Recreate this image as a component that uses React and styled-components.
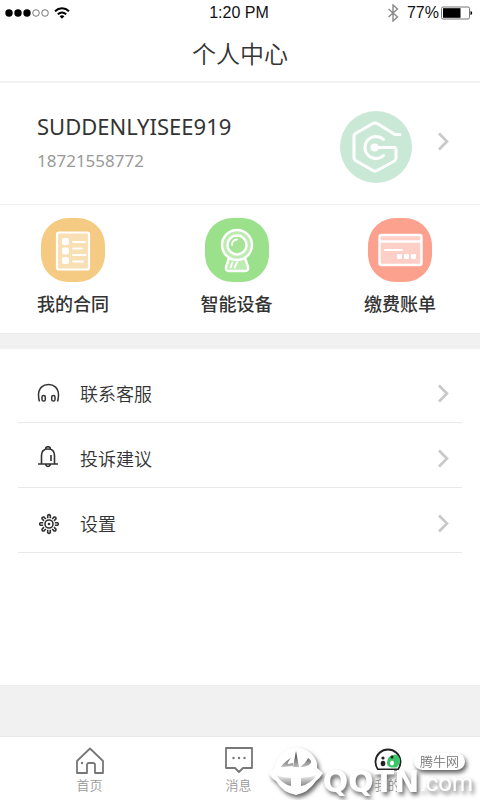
import React from "react";
import styled, { createGlobalStyle } from "styled-components";

const GlobalStyle = createGlobalStyle`
  * {
    box-sizing: border-box;
  }
  body {
    margin: 0;
    background: #f1f1f1;
    color: #333;
    font-family: "Liberation Sans", "Noto Sans CJK SC", sans-serif;
  }
`;

const Page = styled.div`
  min-height: 100vh;
  display: flex;
  flex-direction: column;
`;

const StatusBar = styled.div`
  display: grid;
  grid-template-columns: 1fr auto 1fr;
  align-items: center;
  height: 26px;
  padding: 0 7px 0 5px;
  background: #fff;
  color: #111;
  font-size: 16px;
`;

const StatusGroup = styled.div`
  display: flex;
  align-items: center;
  justify-content: ${(props) => (props.$end ? "flex-end" : "flex-start")};
  gap: ${(props) => (props.$end ? "2px" : "5px")};
`;

const BluetoothIcon = styled.svg`
  width: 12px;
  height: 18px;
  margin-right: 6px;
`;

const Header = styled.header`
  height: 57px;
  background: #fff;
  border-bottom: 2px solid #f1f1f1;
`;

const Title = styled.h1`
  margin: 0;
  font-size: 24px;
  font-weight: 350;
  line-height: 58px;
  text-align: center;
`;

const Profile = styled.a`
  display: flex;
  align-items: center;
  height: 122px;
  padding: 0 30px 0 37px;
  background: #fff;
  border-bottom: 1px solid #efefef;
  color: inherit;
  text-decoration: none;
`;

const ProfileText = styled.div`
  flex: 1;
`;

const Name = styled.div`
  font-family: "Noto Sans", sans-serif;
  font-size: 22px;
  line-height: 34px;
`;

const Phone = styled.div`
  color: #999;
  font-family: "Noto Sans", sans-serif;
  font-size: 17px;
  line-height: 36px;
`;

const AvatarIcon = styled.svg`
  width: 72px;
  height: 72px;
  margin: 7px 24px 0 0;
`;

const Shortcuts = styled.nav`
  display: flex;
  justify-content: space-between;
  padding: 13px 44px 10px 37px;
  background: #fff;
  border-bottom: 1px solid #e9e9e9;
`;

const Shortcut = styled.a`
  display: flex;
  flex-direction: column;
  align-items: center;
  color: #333;
  font-size: 18px;
  font-weight: 500;
  line-height: 36px;
  gap: 5px;
  text-decoration: none;
`;

const Tile = styled.svg`
  width: 64px;
  height: 64px;
`;

const Menu = styled.ul`
  min-height: 337px;
  margin: 15px 0 0;
  padding: 9px 18px;
  background: #fff;
  border-bottom: 1px solid #ececec;
  list-style: none;
`;

const MenuItem = styled.li`
  border-bottom: 1px solid #e9e9e9;
`;

const MenuLink = styled.a`
  display: flex;
  align-items: center;
  gap: 19px;
  height: 64px;
  padding: 6px 12px 0 19px;
  color: #333;
  font-size: 18px;
  font-weight: 350;
  text-decoration: none;
`;

const MenuLabel = styled.span`
  flex: 1;
`;

const MenuIcon = styled.svg`
  width: 24px;
  height: 24px;
`;

const TabBar = styled.nav`
  position: relative;
  display: flex;
  justify-content: space-around;
  height: 64px;
  margin-top: auto;
  padding: 0 18px 0 15px;
  background: #fff;
  border-top: 1px solid #e9e9e9;
`;

const Tab = styled.a`
  width: 72px;
  display: flex;
  flex-direction: column;
  align-items: center;
  padding-top: 8px;
  color: #999;
  font-size: 13px;
  font-weight: 350;
  line-height: 18px;
  text-decoration: none;
`;

const TabIcon = styled.svg`
  width: 32px;
  height: 32px;
`;

const Watermark = styled.div`
  position: absolute;
  right: 7px;
  bottom: 3px;
  display: flex;
  align-items: flex-end;
  color: #fff;
  filter: drop-shadow(2px 3px 2px rgba(0, 0, 0, 0.6));
`;

const Emblem = styled.svg`
  width: 54px;
  height: 50px;
`;

const Brand = styled.span`
  font-family: "DejaVu Sans", sans-serif;
  font-size: 30px;
  font-weight: 700;
  line-height: 30px;
`;

const Domain = styled.span`
  font-family: Roboto, sans-serif;
  font-size: 24px;
  line-height: 28px;
`;

const SiteTag = styled.span`
  position: absolute;
  top: 6px;
  right: 8px;
  padding: 0 6px;
  border-radius: 9px;
  background: #fff;
  color: #777;
  font-size: 13px;
  font-weight: 350;
  line-height: 17px;
`;

const ChevronIcon = styled.svg`
  width: 14px;
  height: 22px;
  margin-bottom: ${(props) => (props.$raised ? "6px" : "0")};
  fill: none;
  stroke: #c8c8c8;
  stroke-width: 2.6;
`;

const Chevron = ({ raised }) => (
  <ChevronIcon viewBox="0 0 14 22" $raised={raised} aria-hidden="true">
    <path d="M3 3.500l8 8-8 8" />
  </ChevronIcon>
);

const Signal = () => (
  <svg width="44" height="10" viewBox="0 0 44 10" aria-hidden="true">
    {[4, 13, 22, 31, 40].map((x, i) => (
      <circle
        key={x}
        cx={x}
        cy="5"
        r={i < 3 ? 3.7 : 3.3}
        fill={i < 3 ? "#000" : "none"}
        stroke={i < 3 ? "none" : "#555"}
        strokeWidth="0.8"
      />
    ))}
  </svg>
);

const Wifi = () => (
  <svg width="16" height="12" viewBox="0 0 16 12" aria-hidden="true">
    <g fill="none" stroke="#000" strokeWidth="2">
      <path d="M1 4.2C5 .4 11 .4 15 4.2" />
      <path d="M3.800 7.300c2.500-2.200 5.900-2.200 8.400 0" />
    </g>
    <path d="M5.600 9.200c1.500-1.200 3.300-1.200 4.800 0L8 11.800z" />
  </svg>
);

const Bluetooth = () => (
  <BluetoothIcon viewBox="0 0 12 18" aria-hidden="true">
    <path
      d="M1.500 5l9 8L6 17V1l4.500 4-9 8"
      fill="none"
      stroke="#8a8a8a"
      strokeWidth="1.400"
    />
  </BluetoothIcon>
);

const Battery = () => (
  <svg width="32" height="14" viewBox="0 0 32 14" aria-hidden="true">
    <rect x=".5" y="1" width="28" height="12" rx="1.500" fill="#fff" stroke="#777" />
    <rect x="2" y="2.200" width="17.500" height="9.600" fill="#000" />
    <path d="M29.500 5c2.200.3 2.200 3.700 0 4z" />
  </svg>
);

const Avatar = () => (
  <AvatarIcon viewBox="0 0 72 72" aria-hidden="true">
    <circle cx="36" cy="36" r="36" fill="#c9e8d5" />
    <g
      fill="none"
      stroke="#fff"
      strokeWidth="3"
      strokeLinecap="round"
      strokeLinejoin="round"
    >
      <path d="M60 23.500h-5L38 13q-3-2-6 0L15.500 22.500q-1.500 1-1.500 3v21q0 2 1.500 3L32 59q3 2 6 0l16.500-9q1.500-1 1.500-3v-8.500q0-2-2-2H36" />
      <path d="M43.500 28.500a11 11 0 1 0 0 16" />
    </g>
    <circle cx="34.500" cy="36.500" r="4" fill="#fff" />
  </AvatarIcon>
);

const tilePath =
  "M32 0h4C52 0 64 12 64 28v8c0 16-12 28-28 28h-8C12 64 0 52 0 36v-8C0 12 12 0 28 0z";

const ContractTile = () => (
  <Tile viewBox="0 0 64 64" aria-hidden="true">
    <path d={tilePath} fill="#f5cb83" />
    <rect x="16" y="14.500" width="32" height="37" rx="2" fill="#f9dfb4" stroke="#fff" strokeWidth="2.200" />
    <g fill="#fff">
      <rect x="21" y="20" width="7" height="7" rx="2" />
      <rect x="21" y="29.500" width="7" height="7" rx="2" />
      <rect x="21" y="39" width="7" height="7" rx="2" />
    </g>
    <path
      d="M32 24h12M32 30.500h9M32 37h12.500M32 43.500h10"
      stroke="#fff"
      strokeWidth="1.800"
      strokeLinecap="round"
    />
  </Tile>
);

const DeviceTile = () => (
  <Tile viewBox="0 0 64 64" aria-hidden="true">
    <path d={tilePath} fill="#9be08a" />
    <g fill="#bdebb2" stroke="#fff" strokeWidth="2.400" strokeLinejoin="round">
      <path d="M24 40h16l3 9q.8 4-3 4H24q-3.800 0-3-4z" />
      <circle cx="32" cy="27" r="15" />
      <circle cx="32" cy="27" r="9.500" fill="#a5e396" />
    </g>
    <path
      d="M27 27q0-5 5-5.500M27.500 44.500l-2 5M32 44.500l-2.500 5"
      fill="none"
      stroke="#fff"
      strokeWidth="1.800"
      strokeLinecap="round"
    />
  </Tile>
);

const BillTile = () => (
  <Tile viewBox="0 0 64 64" aria-hidden="true">
    <path d={tilePath} fill="#fda18f" />
    <rect x="11.500" y="17" width="42" height="30" rx="2" fill="#fdcfc6" stroke="#fff" strokeWidth="2.400" />
    <path d="M12 23.500h41" stroke="#fff" strokeWidth="2.400" />
    <path d="M17 32h17" stroke="#fff" strokeWidth="2.200" strokeLinecap="round" />
    <g fill="#fff">
      <rect x="29" y="36" width="5" height="5" rx="1" />
      <rect x="36" y="36" width="5" height="5" rx="1" />
      <rect x="43" y="36" width="5" height="5" rx="1" />
    </g>
  </Tile>
);

const HeadsetIcon = () => (
  <MenuIcon viewBox="0 0 24 24" fill="none" stroke="#333" strokeWidth="1.500" aria-hidden="true">
    <path d="M2.500 20.500Q1.500 18 1.500 14C1.500 7 6 3.500 11.500 3.500S21.500 7 21.500 14q0 4-1 6.500" />
    <rect x="5" y="14.500" width="3.300" height="5.500" rx="1.600" />
    <rect x="14.700" y="14.500" width="3.300" height="5.500" rx="1.600" />
  </MenuIcon>
);

const BellIcon = () => (
  <MenuIcon viewBox="0 0 24 24" fill="none" stroke="#333" strokeWidth="1.600" aria-hidden="true">
    <path d="M1 18h20M4.500 18V9.500Q4.500 3 11 3t6.500 6.500V18M8.500 3q0-2.300 2.500-2.300T13.500 3M8.500 18.500q2.500 4 5 0M14 9v6" />
  </MenuIcon>
);

const GearIcon = () => (
  <MenuIcon viewBox="0 0 24 24" fill="none" stroke="#333" strokeWidth="1.600" aria-hidden="true">
    <circle cx="12" cy="13" r="4" />
    <circle cx="12" cy="13" r="1.300" fill="#333" stroke="none" />
    {[0, 45, 90, 135, 180, 225, 270, 315].map((angle) => (
      <path
        key={angle}
        d="M10.700 7.200V4.500q1.300-1.800 2.600 0v2.700"
        transform={`rotate(${angle} 12 13)`}
      />
    ))}
  </MenuIcon>
);

const HomeIcon = () => (
  <TabIcon viewBox="0 0 32 32" fill="none" stroke="#777" strokeWidth="1.800" aria-hidden="true">
    <path d="M3 28V16L16 3.500 29 16v12h-8v-8q0-2-2-2h-4q-2 0-2 2v8z" strokeLinejoin="round" />
    <circle cx="8" cy="18" r="1.200" fill="#777" stroke="none" />
  </TabIcon>
);

const MessageIcon = () => (
  <TabIcon viewBox="0 0 32 32" fill="none" stroke="#777" strokeWidth="1.800" aria-hidden="true">
    <path d="M3 3h26v20h-9l-4 4-4-4H3z" strokeLinejoin="round" />
    <g fill="#777" stroke="none">
      <circle cx="10.500" cy="13" r="1.200" />
      <circle cx="16" cy="13" r="1.200" />
      <circle cx="21.500" cy="13" r="1.200" />
    </g>
  </TabIcon>
);

const MineIcon = () => (
  <TabIcon viewBox="0 0 32 32" fill="none" aria-hidden="true">
    <path d="M6 24.500a12.500 12.500 0 1 1 20 0z" fill="#fff" stroke="#222" strokeWidth="1.800" />
    <path d="M23 9.500q-8 1-8 8 0 4.500 4.500 5h5q4-3 3.500-8-1-4-5-5z" fill="#3cc468" />
    <circle cx="11" cy="13" r="1.600" fill="#222" />
    <ellipse cx="11" cy="18.500" rx="2.300" ry="2.800" fill="#222" />
    <circle cx="20" cy="12" r="1.500" fill="#222" />
    <ellipse cx="20" cy="18" rx="2" ry="2.500" fill="#fff" />
  </TabIcon>
);

const shortcuts = [
  { label: "我的合同", Icon: ContractTile },
  { label: "智能设备", Icon: DeviceTile },
  { label: "缴费账单", Icon: BillTile },
];

const menu = [
  { label: "联系客服", Icon: HeadsetIcon },
  { label: "投诉建议", Icon: BellIcon },
  { label: "设置", Icon: GearIcon },
];

const tabs = [
  { label: "首页", Icon: HomeIcon },
  { label: "消息", Icon: MessageIcon },
  { label: "我的", Icon: MineIcon },
];

function App() {
  return (
    <Page>
      <GlobalStyle />
      <StatusBar>
        <StatusGroup>
          <Signal />
          <Wifi />
        </StatusGroup>
        <span>1:20 PM</span>
        <StatusGroup $end>
          <Bluetooth />
          <span>77%</span>
          <Battery />
        </StatusGroup>
      </StatusBar>
      <Header>
        <Title>个人中心</Title>
      </Header>
      <Profile href="#profile">
        <ProfileText>
          <Name>SUDDENLYISEE919</Name>
          <Phone>18721558772</Phone>
        </ProfileText>
        <Avatar />
        <Chevron raised />
      </Profile>
      <Shortcuts>
        {shortcuts.map(({ label, Icon }) => (
          <Shortcut href="#shortcut" key={label}>
            <Icon />
            {label}
          </Shortcut>
        ))}
      </Shortcuts>
      <Menu>
        {menu.map(({ label, Icon }) => (
          <MenuItem key={label}>
            <MenuLink href="#menu">
              <Icon />
              <MenuLabel>{label}</MenuLabel>
              <Chevron />
            </MenuLink>
          </MenuItem>
        ))}
      </Menu>
      <TabBar>
        {tabs.map(({ label, Icon }) => (
          <Tab href="#tab" key={label}>
            <Icon />
            {label}
          </Tab>
        ))}
        <Watermark>
          <Emblem viewBox="0 0 54 50" aria-hidden="true">
            <defs>
              <linearGradient id="cut" x1="0" y1="0" x2="0" y2="1">
                <stop offset="0" stopColor="#333" />
                <stop offset="1" stopColor="#bbb" />
              </linearGradient>
              <linearGradient id="fade" x1="0" y1="0" x2="0" y2="1">
                <stop offset="0" stopColor="#f4f4f4" />
                <stop offset="1" stopColor="#888" />
              </linearGradient>
            </defs>
            <path
              d="M6 18Q12 2 27 0q16 2 21 16v5l6 5q-3 5-7 8-8 12-20 14Q14 46 7 34q-5-3-7-8l5-4z"
              fill="#fff"
            />
            <path
              d="M27 4l3 16h-6zM12 20q3-5 10-9-4 5-3 6l5-1v3zM31 20q6-4 8-9 5 3 2 6-3 3-10 3z"
              fill="url(#cut)"
            />
            <path
              d="M7 28q7 3 15 3v8Q13 37 7 28zM32 31q8 0 15-3-5 9-15 11z"
              fill="url(#fade)"
            />
          </Emblem>
          <Brand>QQTN</Brand>
          <Domain>.com</Domain>
          <SiteTag>腾牛网</SiteTag>
        </Watermark>
      </TabBar>
    </Page>
  );
}

export default App;
